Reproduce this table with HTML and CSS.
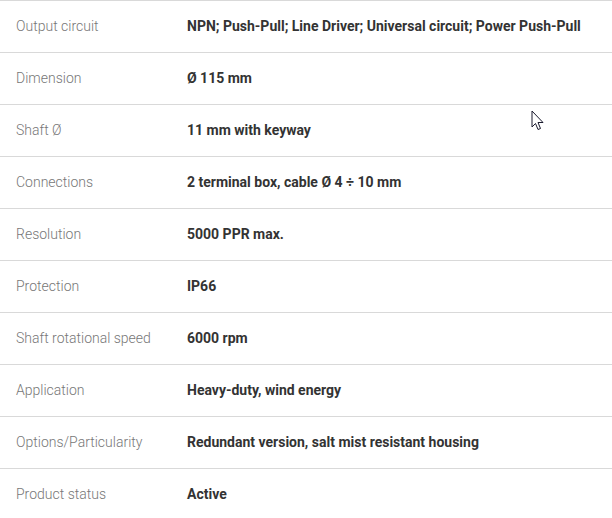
FILE: index.html
```html
<!DOCTYPE html>
<html>
<head>
<meta charset="utf-8">
<link rel="stylesheet" href="styles.css">
</head>
<body>
<div class="specs">
  <div class="row"><div class="label">Output circuit</div><div class="value">NPN; Push-Pull; Line Driver; Universal circuit; Power Push-Pull</div></div>
  <div class="row"><div class="label">Dimension</div><div class="value">Ø 115 mm</div></div>
  <div class="row"><div class="label">Shaft Ø</div><div class="value">11 mm with keyway</div></div>
  <div class="row"><div class="label">Connections</div><div class="value">2 terminal box, cable Ø 4 ÷ 10 mm</div></div>
  <div class="row"><div class="label">Resolution</div><div class="value">5000 PPR max.</div></div>
  <div class="row"><div class="label">Protection</div><div class="value">IP66</div></div>
  <div class="row"><div class="label">Shaft rotational speed</div><div class="value">6000 rpm</div></div>
  <div class="row"><div class="label">Application</div><div class="value">Heavy-duty, wind energy</div></div>
  <div class="row"><div class="label">Options/Particularity</div><div class="value">Redundant version, salt mist resistant housing</div></div>
  <div class="row"><div class="label">Product status</div><div class="value">Active</div></div>
</div>
<svg class="cursor" width="14" height="22" viewBox="0 0 14 22">
  <path d="M1 1 L1 17 L4.5 13.5 L7 19.5 L9.5 18.5 L7 12.5 L12 12.5 Z" fill="#fff" stroke="#1a1a2e" stroke-width="1" stroke-linejoin="miter"/>
</svg>
</body>
</html>
```
FILE: styles.css
```css
html, body {
  margin: 0;
  padding: 0;
  background: #fff;
}
body {
  font-family: Roboto, "Liberation Sans", sans-serif;
  font-size: 14px;
  position: relative;
  width: 612px;
  height: 518px;
  overflow: hidden;
}
.specs {
  display: flex;
  flex-direction: column;
}
.row {
  display: grid;
  grid-template-columns: 171px 1fr;
  align-items: center;
  height: 49px;
  padding: 0 0 2px 16px;
  border-top: 1px solid #d9d9d9;
}
.label {
  font-weight: 300;
  color: #777;
}
.value {
  font-weight: 700;
  color: #333;
}
.cursor {
  position: absolute;
  left: 531px;
  top: 110px;
}
```
